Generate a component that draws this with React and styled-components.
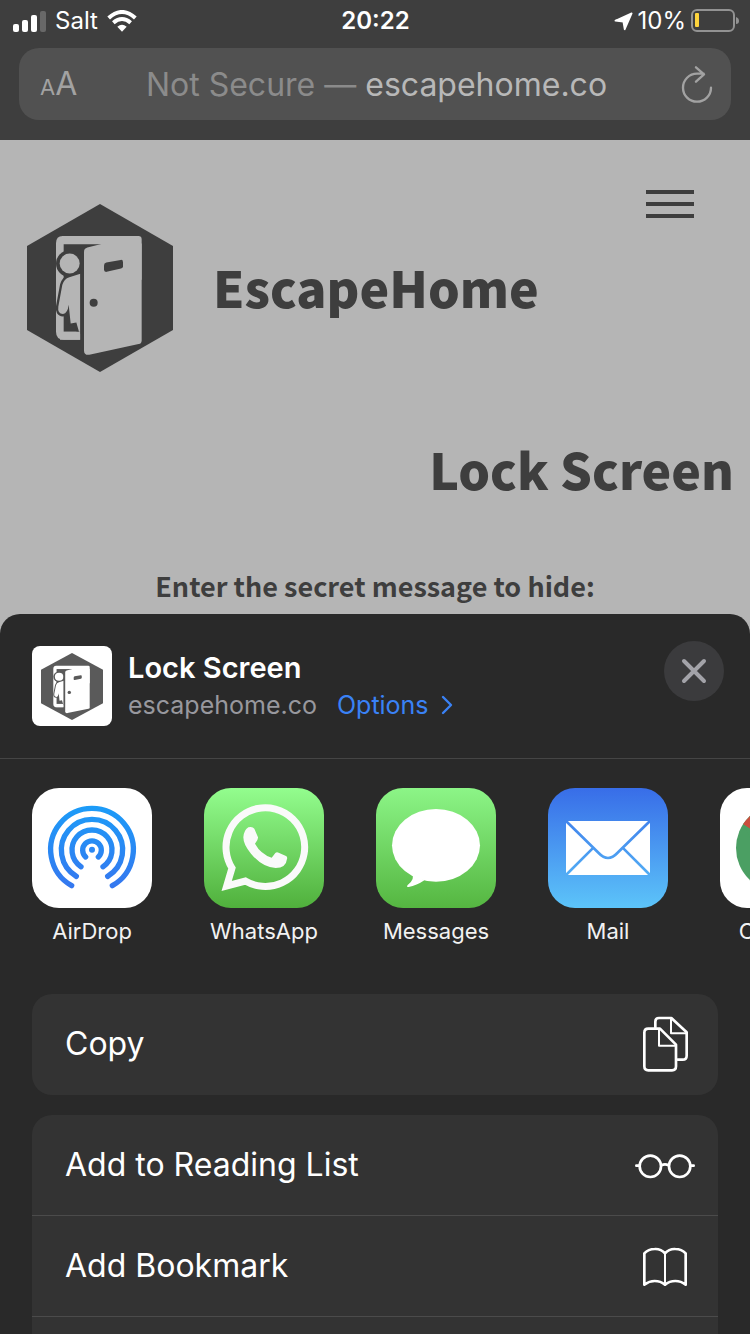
import React from "react";
import styled, { createGlobalStyle } from "styled-components";

const GlobalStyle = createGlobalStyle`
  * { box-sizing: border-box; }
  body {
    margin: 0;
    background: #b5b5b5;
    font-family: Inter, "Liberation Sans", sans-serif;
    overflow-x: hidden;
  }
  button { font: inherit; color: inherit; background: none; border: 0; padding: 0; cursor: pointer; }
  h1, h2, p, ul { margin: 0; padding: 0; }
  svg { display: block; }
`;

const Screen = styled.div`
  display: flex;
  flex-direction: column;
  min-height: 100vh;
  overflow: hidden;
`;

const BrowserChrome = styled.header`
  height: 140px;
  background: #3e3e3e;
  color: #fff;
`;

const StatusBar = styled.div`
  display: grid;
  grid-template-columns: 1fr auto 1fr;
  align-items: center;
  height: 40px;
  padding: 0 11px 0 12px;
  font-size: 24px;
  line-height: 42px;
`;

const StatusGroup = styled.div`
  display: flex;
  align-items: center;
  justify-content: ${(p) => (p.$end ? "flex-end" : "flex-start")};
  gap: ${(p) => (p.$end ? 5 : 9)}px;
`;

const Clock = styled.time`
  font-weight: 600;
`;

const AddressBar = styled.div`
  display: grid;
  grid-template-columns: 1fr auto 1fr;
  align-items: center;
  height: 72px;
  margin: 8px 19px 0;
  padding: 2px 18px 0 21px;
  border-radius: 20px;
  background: #515151;
  color: #a2a2a2;
`;

const TextSizeButton = styled.button`
  justify-self: start;
  display: flex;
  align-items: baseline;
  font-size: 32px;
  line-height: 40px;
  small { font-size: 22px; }
`;

const ReloadButton = styled.button`
  justify-self: end;
`;

const Address = styled.p`
  font-size: 32px;
  line-height: 40px;
  color: #b8b8b8;
  white-space: nowrap;
  span { color: #8b8b8b; }
`;

const WebPage = styled.main`
  height: 474px;
  background: #b5b5b5;
  color: #3e3e3e;
  font-family: "Noto Sans CJK SC", "Open Sans", sans-serif;
`;

const SiteHeader = styled.div`
  display: flex;
  align-items: flex-start;
  height: 278px;
  padding: 50px 56px 0 27px;
`;

const Brand = styled.div`
  display: flex;
  align-items: center;
  flex: 1;
  gap: 40px;
  padding-top: 14px;
`;

const BrandName = styled.span`
  padding-bottom: 4px;
  font-size: 50px;
  line-height: 72px;
  font-weight: 900;
`;

const PageTitle = styled.h1`
  padding-right: 16px;
  font-size: 50px;
  line-height: 100px;
  font-weight: 900;
  text-align: right;
`;

const Prompt = styled.h2`
  padding-top: 48px;
  font-size: 27px;
  line-height: 40px;
  font-weight: 700;
  text-align: center;
`;

const Sheet = styled.section`
  display: flex;
  flex-direction: column;
  flex: 1;
  border-radius: 20px 20px 0 0;
  background: #292929;
  color: #fff;
`;

const SheetHeader = styled.div`
  display: flex;
  align-items: flex-start;
  gap: 16px;
  height: 145px;
  padding: 27px 26px 0 32px;
  border-bottom: 1px solid #454545;
`;

const Thumbnail = styled.div`
  display: flex;
  align-items: center;
  justify-content: center;
  width: 80px;
  height: 80px;
  margin-top: 5px;
  border-radius: 8px;
  background: #fff;
`;

const SheetInfo = styled.div`
  flex: 1;
  padding-top: 7px;
`;

const SheetTitle = styled.h2`
  font-size: 29px;
  line-height: 40px;
  font-weight: 600;
`;

const SheetMeta = styled.div`
  display: flex;
  align-items: center;
  gap: 20px;
  font-size: 25px;
  line-height: 34px;
  color: #98989e;
`;

const OptionsButton = styled.button`
  display: flex;
  align-items: center;
  gap: 12px;
  color: #3a82f6;
`;

const CloseButton = styled.button`
  display: flex;
  align-items: center;
  justify-content: center;
  width: 60px;
  height: 60px;
  border-radius: 50%;
  background: #3b3b3d;
`;

const AppRow = styled.div`
  display: flex;
  gap: 52px;
  padding: 29px 32px 0;
  overflow: hidden;
`;

const AppButton = styled.button`
  display: flex;
  flex-direction: column;
  align-items: center;
  flex: none;
  width: 120px;
  gap: 7px;
  font-size: 22px;
  line-height: 32px;
  color: #f2f2f2;
`;

const AppTile = styled.span`
  display: block;
  width: 120px;
  height: 120px;
  border-radius: 27px;
  overflow: hidden;
  background: ${(p) => p.$fill};
`;

const ActionCard = styled.ul`
  flex: ${(p) => (p.$grow ? 1 : "none")};
  margin: ${(p) => p.$top}px 32px 0;
  border-radius: ${(p) => (p.$grow ? "20px 20px 0 0" : "20px")};
  background: #333;
  list-style: none;
`;

const ActionItem = styled.li`
  min-height: 101px;
  border-bottom: ${(p) => (p.$divided ? "1px solid #4b4b4b" : "0")};
`;

const ActionButton = styled.button`
  display: flex;
  align-items: center;
  justify-content: space-between;
  width: 100%;
  height: 100px;
  padding: 0 23px 0 33px;
  font-size: 32px;
  line-height: 40px;
  text-align: left;
`;

const Logo = ({ width, height, ink, paper }) => (
  <svg width={width} height={height} viewBox="81 72 438 505" preserveAspectRatio="none" aria-hidden="true">
    <path fill={ink} d="M300 72 519 198V451L300 577 81 451V198Z" />
    <path fill={paper} d="M188 168H415Q425 168 425 178V300H241V480H192Q168 480 168 456V190Q168 168 188 168Z" />
    <path fill={ink} d="M191 193H303V456H191Z" />
    <circle cx="208" cy="251" r="40" fill={ink} />
    <path
      fill={paper}
      stroke={ink}
      strokeWidth="14"
      strokeLinejoin="round"
      paintOrder="stroke"
      d="M241 282 208 292Q192 297 187 315L175 380Q172 402 189 403Q203 401 206 375L212 431 229 428 237 456H241Z"
    />
    <path fill={paper} d="M180 456H241V480H180Z" />
    <circle cx="209" cy="251" r="30" fill={paper} />
    <path fill={ink} d="M241 203H256V518L241 500Z" />
    <path fill={paper} d="M252 216Q252 206 262 203L310 191H425V482Q425 491 416 493L268 525Q252 527 252 512Z" />
    <path fill={ink} d="M319 248 362 240Q369 239 369 247V259Q369 264 363 266L320 276Q312 277 312 269V257Q312 250 319 248Z" />
    <circle cx="281" cy="369" r="12" fill={ink} />
  </svg>
);

const SignalIcon = () => (
  <svg width="34" height="22" viewBox="0 0 34 22" fill="#fff" aria-hidden="true">
    <rect x="1" y="14" width="6" height="8" rx="2" />
    <rect x="10" y="10" width="6" height="12" rx="2" />
    <rect x="19" y="5" width="6" height="17" rx="2" />
    <rect x="28" y="1" width="6" height="21" rx="2" opacity=".22" />
  </svg>
);

const WifiIcon = () => (
  <svg width="30" height="22" viewBox="0 0 90 66" fill="none" stroke="#fff" strokeWidth="12" aria-hidden="true">
    <path d="M5 24Q45-12 85 24" />
    <path d="M19 38Q45 16 71 38" />
    <path fill="#fff" stroke="none" d="M31 50Q45 38 59 50L45 65Z" />
  </svg>
);

const LocationIcon = () => (
  <svg width="19" height="19" viewBox="0 0 57 57" aria-hidden="true">
    <path fill="#fff" stroke="#fff" strokeWidth="5" strokeLinejoin="round" d="M53 4 32 52 28 29 4 26Z" />
  </svg>
);

const BatteryIcon = () => (
  <svg width="48" height="24" viewBox="0 0 48 24" aria-hidden="true">
    <rect x="1" y="1" width="42" height="21" rx="5" fill="none" stroke="#929292" strokeWidth="2" />
    <rect x="4" y="4" width="4" height="14" rx="1" fill="#fdd33c" />
    <path fill="#929292" d="M45 8Q48 9 48 12T45 15Z" />
  </svg>
);

const ReloadIcon = () => (
  <svg width="32" height="38" viewBox="0 0 96 114" fill="none" stroke="#a2a2a2" strokeWidth="7" strokeLinecap="round" strokeLinejoin="round" aria-hidden="true">
    <path d="M90 65A42 42 0 1 1 48 23H68M45 4 69 25 45 47" />
  </svg>
);

const MenuIcon = () => (
  <svg width="48" height="28" viewBox="0 0 48 28" fill="#3e3e3e" aria-hidden="true">
    <rect width="48" height="4" />
    <rect y="12" width="48" height="4" />
    <rect y="24" width="48" height="4" />
  </svg>
);

const ChevronIcon = () => (
  <svg width="12" height="20" viewBox="0 0 12 20" fill="none" stroke="currentColor" strokeWidth="2.4" strokeLinecap="round" strokeLinejoin="round" aria-hidden="true">
    <path d="M2 2 10 10 2 18" />
  </svg>
);

const CloseIcon = () => (
  <svg width="26" height="26" viewBox="0 0 26 26" stroke="#a3a3a9" strokeWidth="4" strokeLinecap="round" aria-hidden="true">
    <path d="M3 3 23 23M23 3 3 23" />
  </svg>
);

const AirDropArt = () => (
  <svg viewBox="0 0 360 360" fill="none" stroke="url(#airdrop)" strokeWidth="16" strokeLinecap="round" aria-hidden="true">
    <defs>
      <linearGradient id="airdrop" gradientUnits="userSpaceOnUse" x1="0" y1="54" x2="0" y2="300">
        <stop stopColor="#1c9cf8" />
        <stop offset="1" stopColor="#3577ef" />
      </linearGradient>
    </defs>
    <path d="M119 293A124 124 0 1 1 241 293" />
    <path d="M133 265A92 92 0 1 1 227 265" />
    <path d="M147 236A60 60 0 1 1 213 236" />
    <path d="M161 207A28 28 0 1 1 199 207" />
    <circle cx="180" cy="185" r="9" fill="#2b88f3" stroke="none" />
  </svg>
);

const WhatsAppArt = () => (
  <svg viewBox="0 0 360 360" aria-hidden="true">
    <path fill="none" stroke="#fafafa" strokeWidth="21" d="M84 240 68 294 124 279A118 118 0 1 0 84 240Z" />
    <path
      fill="#fafafa"
      d="M133 118Q146 115 151 122L162 148Q163 155 153 167Q170 198 203 209Q209 202 214 195Q218 191 224 194L246 204Q251 207 249 213Q246 240 215 240Q175 238 141 197Q118 170 118 148Q119 128 133 118Z"
    />
  </svg>
);

const MessagesArt = () => (
  <svg viewBox="0 0 360 360" fill="#fff" aria-hidden="true">
    <ellipse cx="180" cy="172" rx="132" ry="109" />
    <path d="M108 255Q118 274 95 291Q90 297 98 297Q122 293 145 277Z" />
  </svg>
);

const MailArt = () => (
  <svg viewBox="0 0 360 360" aria-hidden="true">
    <defs>
      <linearGradient id="mail" gradientUnits="userSpaceOnUse" x1="0" y1="0" x2="0" y2="360">
        <stop stopColor="#386de8" />
        <stop offset="1" stopColor="#5cc4f9" />
      </linearGradient>
    </defs>
    <rect x="54" y="99" width="252" height="162" rx="2" fill="#fff" />
    <path
      fill="none"
      stroke="url(#mail)"
      strokeWidth="8"
      d="M54 99 152 195Q180 225 208 195L306 99M54 261 134 181M306 261 226 181"
    />
  </svg>
);

const ChromeArt = () => (
  <svg viewBox="0 0 360 360" aria-hidden="true">
    <circle cx="180" cy="180" r="132" fill="#4b9f63" />
    <path fill="#c94f3e" d="M180 180 69 109A132 132 0 0 1 294 114H180Z" />
    <path fill="#4b9f63" d="M69 109 123 213 180 180Z" />
    <path fill="#f5cf46" d="M180 114H294A132 132 0 0 1 180 312L237 213Z" />
    <circle cx="180" cy="180" r="62" fill="#fff" />
    <circle cx="180" cy="180" r="49" fill="#4a86ec" />
  </svg>
);

const LineIcon = ({ top, children }) => (
  <svg width="60" height="60" viewBox={`105 ${top} 180 180`} fill="none" stroke="#fff" strokeWidth="8" strokeLinecap="round" strokeLinejoin="round" aria-hidden="true">
    {children}
  </svg>
);

const CopyIcon = () => (
  <LineIcon top={103}>
    <path d="M166 143V126Q166 115 177 115H214L260 158V228Q260 240 248 240H233" />
    <path strokeWidth="6" d="M213 117V161H258M177 149V198H227" />
    <path d="M145 147H180L228 195V260Q228 272 216 272H145Q133 272 133 260V159Q133 147 145 147Z" />
  </LineIcon>
);

const GlassesIcon = () => (
  <LineIcon top={464}>
    <circle cx="151" cy="558" r="32" />
    <circle cx="239" cy="558" r="32" />
    <path d="M184 555Q195 549 206 555M109 556H118M272 556H281" />
  </LineIcon>
);

const BookIcon = () => (
  <LineIcon top={768}>
    <path d="M195 820Q183 806 164 807Q145 807 133 820V914Q148 903 164 903Q182 903 195 914Q208 903 226 903Q243 903 257 914V820Q245 807 226 807Q207 806 195 820Z" />
    <path strokeWidth="6" d="M195 820V914" />
  </LineIcon>
);

const apps = [
  { name: "AirDrop", fill: "#fff", Art: AirDropArt },
  { name: "WhatsApp", fill: "linear-gradient(#93fd8e, #50b03c)", Art: WhatsAppArt },
  { name: "Messages", fill: "linear-gradient(#8cf587, #55b641)", Art: MessagesArt },
  { name: "Mail", fill: "linear-gradient(#386de8, #5cc4f9)", Art: MailArt },
  { name: "Chrome", fill: "#fff", Art: ChromeArt },
];

export default function App() {
  return (
    <Screen>
      <GlobalStyle />
      <BrowserChrome>
        <StatusBar>
          <StatusGroup>
            <SignalIcon />
            <span>Salt</span>
            <WifiIcon />
          </StatusGroup>
          <Clock>20:22</Clock>
          <StatusGroup $end>
            <LocationIcon />
            <span>10%</span>
            <BatteryIcon />
          </StatusGroup>
        </StatusBar>
        <AddressBar>
          <TextSizeButton aria-label="Text size">
            <small>A</small>A
          </TextSizeButton>
          <Address>
            <span>Not Secure — </span>escapehome.co
          </Address>
          <ReloadButton aria-label="Reload">
            <ReloadIcon />
          </ReloadButton>
        </AddressBar>
      </BrowserChrome>

      <WebPage>
        <SiteHeader>
          <Brand>
            <Logo width={146} height={168} ink="#3e3e3e" paper="#b5b5b5" />
            <BrandName>EscapeHome</BrandName>
          </Brand>
          <button aria-label="Menu">
            <MenuIcon />
          </button>
        </SiteHeader>
        <PageTitle>Lock Screen</PageTitle>
        <Prompt>Enter the secret message to hide:</Prompt>
      </WebPage>

      <Sheet>
        <SheetHeader>
          <Thumbnail>
            <Logo width={62} height={67} ink="#5a5a5a" paper="#fff" />
          </Thumbnail>
          <SheetInfo>
            <SheetTitle>Lock Screen</SheetTitle>
            <SheetMeta>
              <span>escapehome.co</span>
              <OptionsButton>
                Options
                <ChevronIcon />
              </OptionsButton>
            </SheetMeta>
          </SheetInfo>
          <CloseButton aria-label="Close">
            <CloseIcon />
          </CloseButton>
        </SheetHeader>

        <AppRow>
          {apps.map(({ name, fill, Art }) => (
            <AppButton key={name}>
              <AppTile $fill={fill}>
                <Art />
              </AppTile>
              {name}
            </AppButton>
          ))}
        </AppRow>

        <ActionCard $top={47}>
          <ActionItem>
            <ActionButton>
              Copy
              <CopyIcon />
            </ActionButton>
          </ActionItem>
        </ActionCard>
        <ActionCard $top={20} $grow>
          <ActionItem $divided>
            <ActionButton>
              Add to Reading List
              <GlassesIcon />
            </ActionButton>
          </ActionItem>
          <ActionItem $divided>
            <ActionButton>
              Add Bookmark
              <BookIcon />
            </ActionButton>
          </ActionItem>
        </ActionCard>
      </Sheet>
    </Screen>
  );
}
